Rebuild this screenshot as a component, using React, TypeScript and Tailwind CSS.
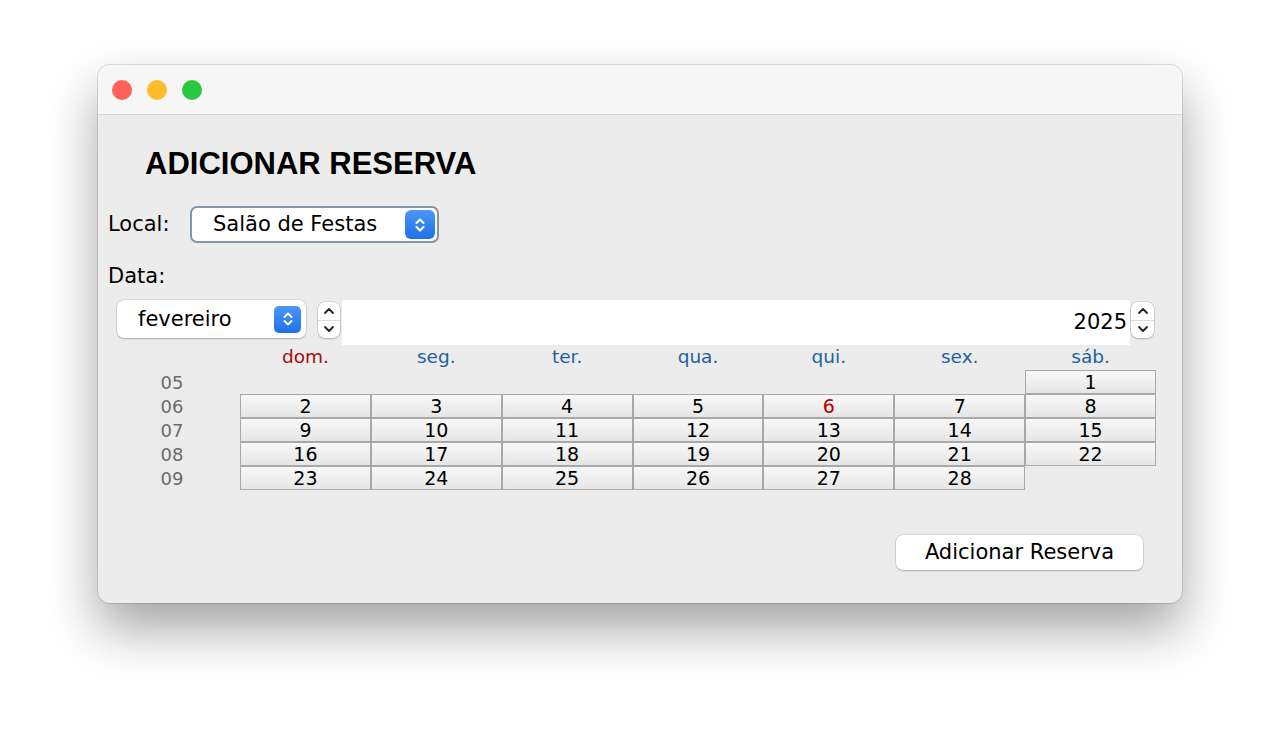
import React from "react";

const font = { fontFamily: '"DejaVu Sans", "Noto Sans", sans-serif' };

function BlueArrows({ className }: { className: string }) {
  return (
    <div className={className}>
      <svg width="16" height="18" viewBox="0 0 16 18" fill="none" stroke="white" strokeWidth="2" strokeLinecap="round" strokeLinejoin="round">
        <path d="M4.5 7 L8 3.5 L11.5 7" />
        <path d="M4.5 11 L8 14.5 L11.5 11" />
      </svg>
    </div>
  );
}

function Spinner({ className }: { className: string }) {
  return (
    <div className={className}>
      <div className="flex-1 flex items-center justify-center border-b border-[#dcdcdc]">
        <svg width="12" height="8" viewBox="0 0 12 8" fill="none" stroke="#222" strokeWidth="1.8" strokeLinecap="round" strokeLinejoin="round">
          <path d="M2 6 L6 2 L10 6" />
        </svg>
      </div>
      <div className="flex-1 flex items-center justify-center">
        <svg width="12" height="8" viewBox="0 0 12 8" fill="none" stroke="#222" strokeWidth="1.8" strokeLinecap="round" strokeLinejoin="round">
          <path d="M2 2 L6 6 L10 2" />
        </svg>
      </div>
    </div>
  );
}

const headers = ["dom.", "seg.", "ter.", "qua.", "qui.", "sex.", "sáb."];
const weeks: { w: string; days: (number | null)[] }[] = [
  { w: "05", days: [null, null, null, null, null, null, 1] },
  { w: "06", days: [2, 3, 4, 5, 6, 7, 8] },
  { w: "07", days: [9, 10, 11, 12, 13, 14, 15] },
  { w: "08", days: [16, 17, 18, 19, 20, 21, 22] },
  { w: "09", days: [23, 24, 25, 26, 27, 28, null] },
];

export default function App() {
  return (
    <div className="w-[1280px] h-[733px] bg-white pt-[65px] pl-[98px]" style={font}>
      <div className="w-[1084px] h-[538px] rounded-[12px] bg-[#ececec] overflow-hidden flex flex-col shadow-[0_0_0_1px_rgba(0,0,0,0.12),0_26px_52px_rgba(0,0,0,0.36)]">
        {/* title bar */}
        <div className="h-[50px] shrink-0 bg-[#f6f6f6] border-b border-[#d6d6d6] flex items-center pl-[14px] gap-[15px]">
          <div className="w-[20px] h-[20px] rounded-full bg-[#fe5f57]" />
          <div className="w-[20px] h-[20px] rounded-full bg-[#febc2e]" />
          <div className="w-[20px] h-[20px] rounded-full bg-[#28c840]" />
        </div>

        <div className="flex flex-col pl-[10px]">
          <div
            className="mt-[30px] ml-[37px] h-[37px] leading-[37px] text-[31px] font-bold text-black"
            style={{ fontFamily: '"Liberation Sans", Arial, sans-serif' }}
          >
            ADICIONAR RESERVA
          </div>

          {/* Local row */}
          <div className="mt-[24px] flex items-center h-[37px]">
            <span className="text-[21px] text-black w-[82px]">Local:</span>
            <div className="w-[249px] h-[37px] rounded-[7px] border-2 border-[#8595a8] bg-white flex items-center pl-[21px] pr-[2px] justify-between">
              <span className="text-[21px] text-black leading-none">Salão de Festas</span>
              <BlueArrows className="w-[30px] h-[29px] rounded-[6px] bg-gradient-to-b from-[#4a97f7] to-[#1f6fe8] flex items-center justify-center" />
            </div>
          </div>

          <div className="mt-[21px] h-[24px] leading-[24px] text-[21px] text-black">Data:</div>

          {/* month/year row */}
          <div className="mt-[12px] flex items-start h-[45px]">
            <div className="ml-[9px] w-[189px] h-[38px] rounded-[7px] bg-white shadow-[0_0_0_0.5px_rgba(0,0,0,0.15),0_1px_2px_rgba(0,0,0,0.2)] flex items-center justify-between pl-[21px] pr-[5px]">
              <span className="text-[21px] text-black leading-none">fevereiro</span>
              <BlueArrows className="w-[27px] h-[27px] rounded-[5px] bg-gradient-to-b from-[#4a97f7] to-[#1f6fe8] flex items-center justify-center" />
            </div>
            <Spinner className="ml-[12px] mt-[2px] w-[22px] h-[36px] rounded-[7px] bg-white shadow-[0_0_0_0.5px_rgba(0,0,0,0.18),0_1px_2px_rgba(0,0,0,0.18)] flex flex-col" />
            <div className="ml-[2px] w-[788px] h-[45px] bg-white flex items-center justify-end pr-[3px]">
              <span className="text-[21px] text-black leading-none">2025</span>
            </div>
            <Spinner className="ml-[1px] mt-[2px] w-[23px] h-[36px] rounded-[7px] bg-white shadow-[0_0_0_0.5px_rgba(0,0,0,0.18),0_1px_2px_rgba(0,0,0,0.18)] flex flex-col" />
          </div>

          {/* calendar */}
          <div className="w-[1048px] grid grid-cols-[132px_repeat(7,1fr)]">
            <div className="h-[25px]" />
            {headers.map((h, i) => (
              <div
                key={h}
                className={`h-[25px] flex items-center justify-center pb-[1px] text-[18.5px] ${i === 0 ? "text-[#a70d0d]" : "text-[#1f62a0]"}`}
              >
                {h}
              </div>
            ))}
            {weeks.map((wk) => (
              <React.Fragment key={wk.w}>
                <div className="h-[24px] flex items-center justify-center pr-[4px] text-[18px] text-[#6b6b6b]">{wk.w}</div>
                {wk.days.map((d, i) =>
                  d === null ? (
                    <div key={i} className="h-[24px]" />
                  ) : (
                    <div
                      key={i}
                      className={`h-[24px] border border-[#a8a8a8] bg-gradient-to-b from-[#f8f8f8] to-[#e6e6e6] flex items-center justify-center text-[19px] leading-none ${d === 6 ? "text-[#b00000]" : "text-black"}`}
                    >
                      {d}
                    </div>
                  )
                )}
              </React.Fragment>
            ))}
          </div>

          <div className="mt-[45px] flex justify-end pr-[39px]">
            <div className="w-[247px] h-[35px] rounded-[7px] bg-white shadow-[0_0_0_0.5px_rgba(0,0,0,0.15),0_1px_2px_rgba(0,0,0,0.2)] flex items-center justify-center text-[21px] text-black">
              Adicionar Reserva
            </div>
          </div>
        </div>
      </div>
    </div>
  );
}
